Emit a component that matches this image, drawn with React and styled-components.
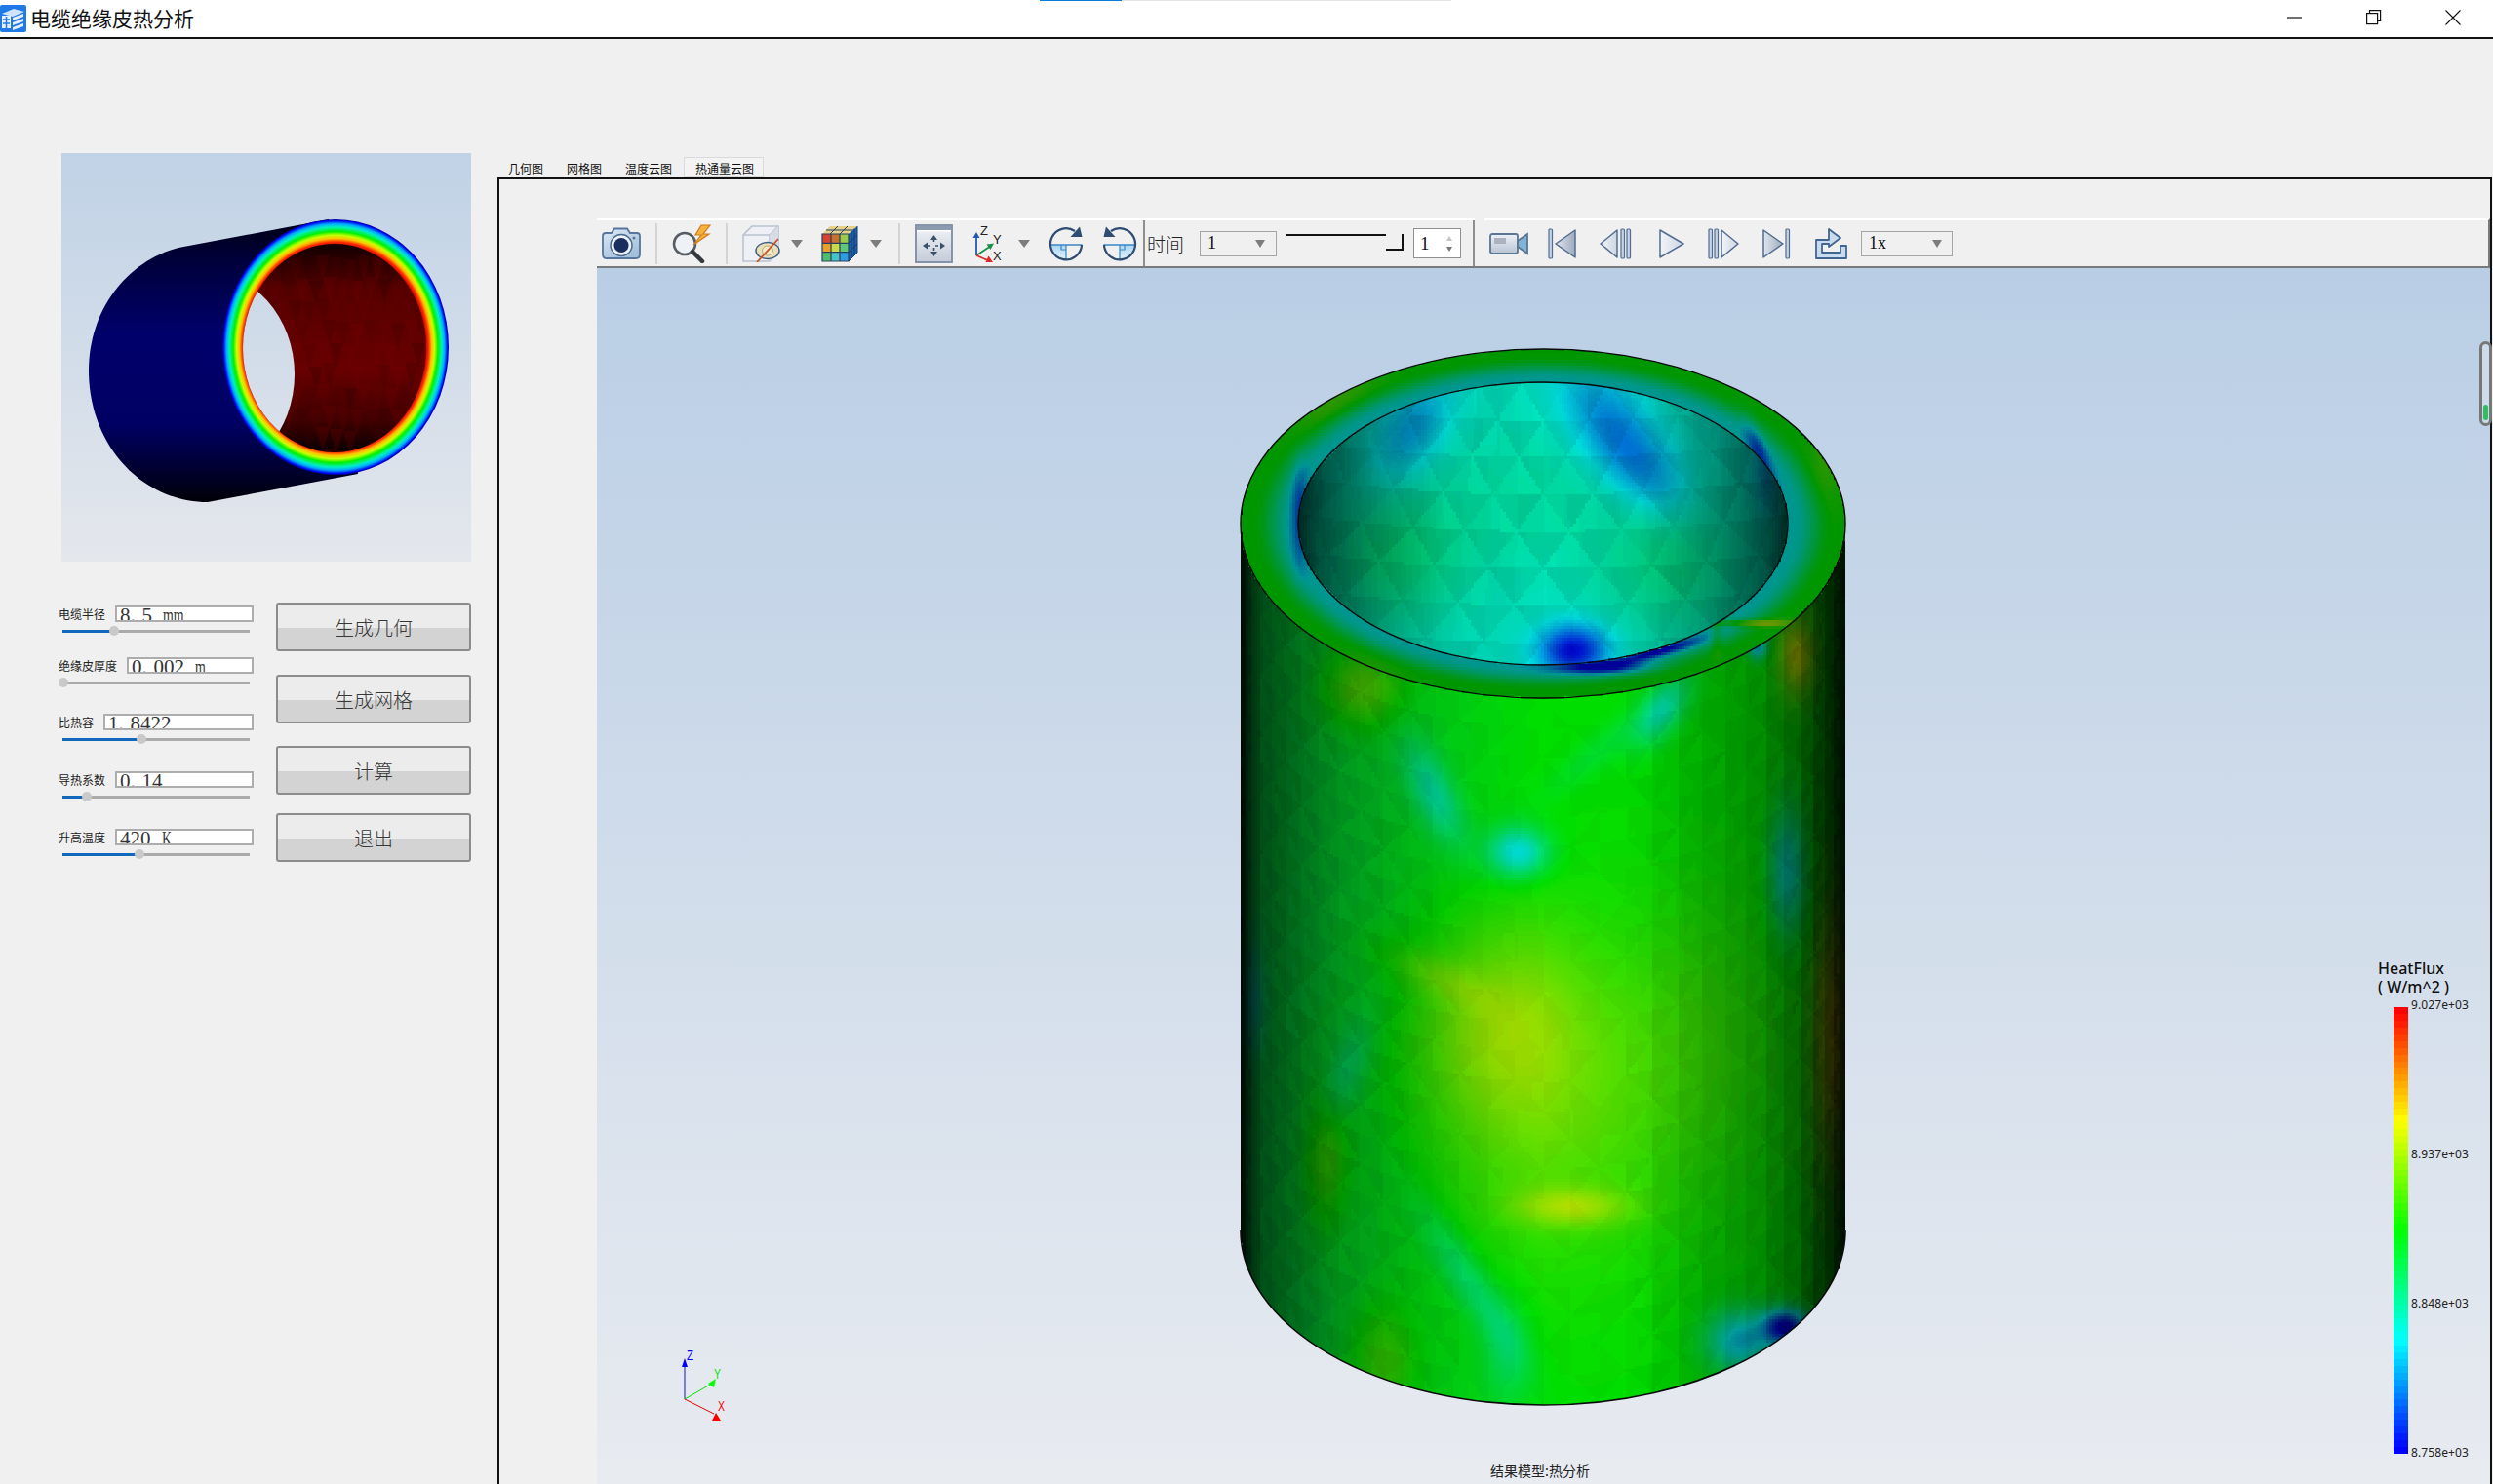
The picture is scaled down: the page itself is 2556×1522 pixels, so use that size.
import React from 'react';
import styled, { createGlobalStyle } from 'styled-components';

const CJK = '"Noto Sans CJK SC", "Noto Sans", sans-serif';
const SERIF = '"Liberation Serif", "Noto Sans CJK SC", serif';

const GlobalStyle = createGlobalStyle`
  html, body {
    margin: 0;
    padding: 0;
    background: #f0f0f0;
  }
`;

/* ---------- heat colours and the cylinder mesh ---------- */

const clamp = (v, a, b) => Math.min(b, Math.max(a, v));

const rainbow = (h) => {
  const t = clamp(h, 0, 1) * 4;
  if (t < 1) return [0, t * 255, 255];
  if (t < 2) return [0, 255, (2 - t) * 255];
  if (t < 3) return [(t - 2) * 255, 255, 0];
  return [255, (4 - t) * 255, 0];
};

const spots = (list, x, y) => {
  let sum = 0;
  for (const [cx, cy, sx, sy, amp, rot = 0] of list) {
    const a = (rot * Math.PI) / 180;
    const dx = x - cx;
    const dy = y - cy;
    const u = (dx * Math.cos(a) + dy * Math.sin(a)) / sx;
    const v = (-dx * Math.sin(a) + dy * Math.cos(a)) / sy;
    sum += amp * Math.exp(-0.5 * (u * u + v * v));
  }
  return sum;
};

const lerpTable = (table, x) => {
  for (let i = 1; i < table.length; i++) {
    if (x <= table[i][0]) {
      const [x0, y0] = table[i - 1];
      const [x1, y1] = table[i];
      return y0 + ((y1 - y0) * (x - x0)) / (x1 - x0);
    }
  }
  return table[table.length - 1][1];
};

const noise = (id) => {
  const s = Math.sin(id * 12.9898) * 43758.5453;
  return s - Math.floor(s);
};

const triId = (u, v) => {
  const row = Math.floor(v);
  const fv = v - row;
  const x = u + (row % 2 ? 1 : 0);
  const cell = Math.floor(x);
  const fx = x - cell;
  const side = cell % 2 === 0 ? (fx + fv > 1 ? 1 : 0) : fx < fv ? 1 : 0;
  return { id: row * 1009 + cell * 2 + side, cell, side };
};

const CX = 1582;
const TOP = 537;
const BOTTOM = 1262;
const RX = 310;
const RY = 179;

const bodySpots = [
  [1536, 1049, 60, 70, 0.11],
  [1580, 1130, 95, 115, 0.1],
  [1612, 1238, 42, 14, 0.13],
  [1470, 1000, 45, 14, 0.06, 25],
  [1557, 874, 22, 18, -0.25],
  [1471, 815, 40, 15, -0.15, 65],
  [1507, 1315, 62, 14, -0.11, 57],
  [1545, 1390, 18, 40, -0.08],
  [1704, 729, 14, 28, -0.18, 35],
  [1640, 770, 50, 12, -0.05, -40],
  [1833, 894, 13, 45, -0.22],
  [1831, 1361, 16, 13, -0.5],
  [1785, 1375, 24, 22, -0.28],
  [1397, 705, 28, 28, 0.14],
  [1359, 1185, 16, 50, 0.11],
  [1418, 1398, 24, 42, 0.1],
  [1284, 1025, 8, 40, -0.14],
  [1380, 1100, 14, 42, -0.08, 20],
  [1881, 1063, 14, 90, 0.25],
  [1843, 673, 13, 28, 0.22],
  [1802, 663, 7, 9, -0.3],
  [1740, 1060, 60, 100, 0.04],
];

const capSpots = [
  [1370, 403, 40, 14, 0.08, -35],
  [1875, 470, 14, 30, 0.07],
  [1333, 530, 6, 34, -0.18],
  [1805, 470, 6, 26, -0.2, -20],
  [1640, 684, 32, 5, -0.32],
  [1700, 668, 30, 4, -0.28, -15],
  [1795, 639, 30, 2.5, 0.28],
  [1760, 650, 4, 14, 0.12],
  [1405, 690, 26, 10, 0.06, 20],
];

const wallSpots = [
  [1448, 440, 40, 22, -0.11, -60],
  [1650, 435, 48, 26, -0.13, 55],
  [1690, 485, 36, 22, -0.09, 50],
  [1613, 667, 24, 18, -0.28],
  [1565, 513, 85, 60, 0.03],
  [1426, 573, 50, 50, 0.07],
  [1717, 580, 50, 50, 0.06],
  [1812, 480, 10, 30, -0.1],
];

const bodyShade = [[-1, 0.03], [-0.96, 0.2], [-0.93, 0.3], [-0.66, 0.58], [-0.3, 0.78], [0, 0.87], [0.3, 0.85], [0.5, 0.68], [0.7, 0.56], [0.83, 0.4], [0.96, 0.14], [1, 0.04]];
const wallShade = [[0, 0.84], [0.4, 0.78], [0.7, 0.55], [0.9, 0.32], [1, 0.16]];

const surfaceColor = (x, y) => {
  const dx = (x - CX) / RX;
  const dy = (y - TOP) / RY;
  const rho = Math.sqrt(dx * dx + dy * dy);
  if (rho < 0.81) {
    // inner wall, triangles fan out from the far rim
    const frac = clamp((y - 393) / 289, 0, 1);
    const w = 26 * (0.85 + 0.35 * frac);
    const tri = triId((x - CX) / w + 100, (y - 393 + 26 * dx * dx) / 38 + 4);
    const cw = Math.abs(x - CX) / 251;
    const b = lerpTable(wallShade, clamp(cw, 0, 1)) * (1 + (noise(tri.id) - 0.5) * 0.05 + (tri.side ? 0.035 : -0.035));
    const h = 0.285 + spots(wallSpots, x, y);
    return rainbow(h).map((c) => c * b);
  }
  if (rho <= 1) {
    const frac = (rho - 0.81) / 0.19;
    const s = clamp((frac - 0.1) / 0.7, 0, 1);
    const h = 0.26 + 0.24 * s * s * (3 - 2 * s) + spots(capSpots, x, y);
    return rainbow(h).map((c) => c * 0.58);
  }
  const cc = clamp(dx, -1, 1);
  const phi = Math.acos(cc);
  const sin = Math.sin(phi);
  const t = (y - RY * sin - TOP) / (BOTTOM - TOP);
  const N = 34;
  const u = (phi / Math.PI) * N;
  const tri = triId(u, t * 24 + 4);
  const cf = Math.cos((Math.PI * (tri.cell + (tri.side ? 0.7 : 0.3) - (Math.floor(t * 24 + 4) % 2 ? 1 : 0))) / N);
  const snap = cc > 0.1 ? cf * 0.8 + cc * 0.2 : cf * 0.35 + cc * 0.65;
  const leftFacet = cc < 0 ? (tri.side ? 0.05 : -0.05) * -cc : 0;
  const b = lerpTable(bodyShade, clamp(snap, -1, 1)) * (1 + (noise(tri.id) - 0.5) * 0.035 + leftFacet);
  const h = 0.5 + (cc < 0 ? 0.08 * cc : 0) + spots(bodySpots, x, y);
  return rainbow(h).map((c) => c * b);
};

const buildMesh = () => {
  const step = 3;
  const groups = new Map();
  const quant = (c) => clamp(Math.round(c / 6) * 6, 0, 255);
  for (let y = 354; y < 1446; y += step) {
    let runStart = null;
    let runKey = null;
    const flush = (end) => {
      if (runKey === null) return;
      const seg = `M${runStart} ${y}h${end - runStart}v${step}h${runStart - end}z`;
      groups.set(runKey, (groups.get(runKey) || '') + seg);
      runKey = null;
    };
    for (let x = 1268; x < 1898; x += step) {
      const px = x + step / 2;
      const py = y + step / 2;
      const dx = (px - CX) / RX;
      const inside =
        Math.abs(dx) <= 1.01 &&
        py >= TOP - RY * Math.sqrt(Math.max(0, 1 - dx * dx)) - 4 &&
        py <= BOTTOM + RY * Math.sqrt(Math.max(0, 1 - dx * dx)) + 4;
      if (!inside) {
        flush(x);
        continue;
      }
      const [r, g, b] = surfaceColor(clamp(px, CX - RX + 0.5, CX + RX - 0.5), py);
      const key = `rgb(${quant(r)},${quant(g)},${quant(b)})`;
      if (key !== runKey) {
        flush(x);
        runStart = x;
        runKey = key;
      }
    }
    flush(1898);
  }
  return [...groups.entries()];
};

const meshPaths = buildMesh();

const legendBands = (() => {
  const n = 66;
  const stops = [];
  for (let i = 0; i < n; i++) {
    const [r, g, b] = rainbow(1 - i / (n - 1));
    const col = `rgb(${Math.round(r)},${Math.round(g)},${Math.round(b)})`;
    stops.push(`${col} ${(i / n) * 100}%`, `${col} ${((i + 1) / n) * 100}%`);
  }
  return `linear-gradient(to bottom, ${stops.join(', ')})`;
})();

/* ---------- window chrome ---------- */

const Page = styled.div`
  width: 2556px;
  height: 1522px;
  display: flex;
  flex-direction: column;
  overflow: hidden;
  position: relative;
  background: #f0f0f0;
  font-family: ${CJK};
`;

const TitleBar = styled.div`
  height: 38px;
  display: flex;
  align-items: center;
  padding-right: 1px;
  background: #fff;
  border-bottom: 2px solid #111;
  flex: none;
`;

const TitleText = styled.div`
  margin-left: 4px;
  padding-bottom: 3px;
  font-size: 21px;
  color: #111;
  flex: 1;
`;

const WindowButton = styled.div`
  width: 81px;
  height: 36px;
  align-self: flex-start;
  display: flex;
  align-items: center;
  justify-content: center;
`;

const LoadLine = styled.div`
  position: absolute;
  top: 0;
  left: 1066px;
  width: 422px;
  height: 1px;
  background: linear-gradient(to right, #0a7bd8 84px, #e4e4e4 84px);
`;

const Main = styled.div`
  flex: 1;
  display: flex;
  min-height: 0;
`;

/* ---------- left column ---------- */

const LeftColumn = styled.div`
  width: 509px;
  flex: none;
  padding-top: 117px;
`;

const Preview = styled.div`
  width: 420px;
  height: 419px;
  margin-left: 63px;
  background: linear-gradient(to bottom, #c0d2e6, #e4e7ec);

  svg {
    display: block;
  }
`;

const Controls = styled.div`
  display: flex;
  margin-top: 42px;
`;

const Params = styled.div`
  width: 200px;
  margin-left: 60px;
  padding-top: 3px;
`;

const ParamRow = styled.div`
  margin-top: ${(p) => p.$gap}px;
`;

const ParamHead = styled.div`
  display: flex;
  align-items: center;
  gap: 10px;
`;

const ParamLabel = styled.div`
  font-size: 12px;
  line-height: 17px;
  color: #222;
  white-space: nowrap;
`;

const ParamValue = styled.div`
  flex: 1;
  height: 17px;
  box-sizing: border-box;
  border: 2px solid #adadad;
  background: #fff;
  overflow: hidden;
  padding-left: 3px;
  font-family: ${SERIF};
  font-size: 21px;
  line-height: 17px;
  color: #333;
  white-space: nowrap;
`;

const Dot = styled.span`
  display: inline-block;
  width: 12px;
`;

const Unit = styled.span`
  display: inline-block;
  margin-left: 11px;
  transform: scaleX(0.66);
  transform-origin: left center;
`;

const Track = styled.div`
  position: relative;
  width: 192px;
  height: 3px;
  margin: 8px 0 0 4px;
  background: #ababab;
`;

const TrackFill = styled.div`
  height: 100%;
  background: #1168bc;
`;

const Thumb = styled.div`
  position: absolute;
  top: -4px;
  width: 10px;
  height: 10px;
  margin-left: -5px;
  border-radius: 50%;
  background: #c9c9c9;
`;

const ActionColumn = styled.div`
  margin-left: 23px;
`;

const ActionButton = styled.div`
  width: 200px;
  height: 50px;
  box-sizing: border-box;
  margin-top: ${(p) => p.$gap}px;
  display: flex;
  align-items: center;
  justify-content: center;
  border: 2px solid #8c8c8c;
  border-radius: 3px;
  background: linear-gradient(to bottom, #ececec 52%, #d3d3d3 52%);
  font-size: 20px;
  font-weight: 300;
  color: #383838;
`;

/* ---------- tabs and toolbar ---------- */

const RightColumn = styled.div`
  flex: 1;
  min-width: 0;
  display: flex;
  flex-direction: column;
  padding-top: 121px;
`;

const Tabs = styled.div`
  display: flex;
  align-items: flex-end;
  height: 21px;
  flex: none;
`;

const Tab = styled.div`
  padding: 0 12px;
  height: 21px;
  line-height: 23px;
  font-size: 12px;
  color: #111;
  box-sizing: border-box;
  ${(p) => p.$active && 'padding-right: 10px; background: #f3f3f3; outline: 1px solid #dadada; outline-offset: -1px;'}
`;

const Pane = styled.div`
  flex: 1;
  min-height: 0;
  display: flex;
  flex-direction: column;
  margin-left: 1px;
  margin-right: 1px;
  padding: 40px 0 0 100px;
  border: 2px solid #111;
  border-bottom: 0;
`;

const ToolRow = styled.div`
  display: flex;
  box-sizing: border-box;
  height: 51px;
  flex: none;
  border-bottom: 2px solid #7a7a7a;
`;

const ToolSection = styled.div`
  display: flex;
  align-items: center;
  box-sizing: border-box;
  height: 49px;
  border-top: 2px solid #fff;
  ${(p) => (p.$grow ? 'flex: 1; border-right: 2px solid #7a7a7a; margin-left: 10px;' : 'width: 900px;')}
`;

const Tool = styled.div`
  flex: none;
  margin-left: ${(p) => p.$ml}px;
  display: flex;

  svg {
    display: block;
  }
`;

const Sep = styled.div`
  flex: none;
  width: 2px;
  height: ${(p) => (p.$tall ? 47 : 42)}px;
  margin-left: ${(p) => p.$ml}px;
  background: ${(p) => (p.$tall ? '#8f8f8f' : '#d4d4d4')};
`;

const Caret = styled.div`
  flex: none;
  margin-left: ${(p) => p.$ml}px;
  width: 0;
  height: 0;
  border-left: 6px solid transparent;
  border-right: 6px solid transparent;
  border-top: 8px solid #7d7d7d;
`;

const ToolText = styled.div`
  flex: none;
  width: 38px;
  margin-left: 2px;
  font-size: 19px;
  font-weight: 300;
  color: #222;
  white-space: nowrap;
`;

const Combo = styled.div`
  flex: none;
  box-sizing: border-box;
  width: ${(p) => p.$w}px;
  height: 26px;
  margin-left: ${(p) => p.$ml}px;
  padding: 0 8px 0 7px;
  display: flex;
  align-items: center;
  justify-content: space-between;
  border: 1.5px solid #a6a6a6;
  font-family: ${SERIF};
  font-size: 18px;
  color: #111;
`;

const ComboCaret = styled.div`
  width: 0;
  height: 0;
  margin-right: ${(p) => p.$mr}px;
  border-left: 5px solid transparent;
  border-right: 5px solid transparent;
  border-top: 8px solid #7d7d7d;
`;

const TimeSlider = styled.div`
  flex: none;
  display: flex;
  align-items: flex-start;
  width: 120px;
  height: 17px;
  margin-left: 10px;
  margin-bottom: 2px;
`;

const TimeLine = styled.div`
  width: 102px;
  height: 2px;
  background: #111;
`;

const TimeCorner = styled.div`
  width: 18px;
  height: 17px;
  box-sizing: border-box;
  border-right: 2px solid #111;
  border-bottom: 2px solid #111;
`;

const Spin = styled.div`
  flex: none;
  box-sizing: border-box;
  width: 49px;
  height: 31px;
  margin-left: 10px;
  padding: 0 8px 0 6px;
  display: flex;
  align-items: center;
  justify-content: space-between;
  border: 1.5px solid #909090;
  background: #fff;
  font-family: ${SERIF};
  font-size: 19px;
  color: #111;
`;

const SpinArrows = styled.div`
  display: flex;
  flex-direction: column;
  gap: 6px;
`;

const SpinArrow = styled.div`
  width: 0;
  height: 0;
  border-left: 3.5px solid transparent;
  border-right: 3.5px solid transparent;
  ${(p) => (p.$up ? 'border-bottom: 5px solid #c4c4c4;' : 'border-top: 5px solid #777;')}
`;

/* ---------- 3d view ---------- */

const Viewport = styled.div`
  flex: 1;
  min-height: 0;
  position: relative;
  background: linear-gradient(to bottom, #b9cee5, #e8ebf0);

  > svg:first-child {
    display: block;
  }
`;

const Triad = styled.svg`
  position: absolute;
  left: 78px;
  top: 1100px;
`;

const Legend = styled.div`
  position: absolute;
  left: 1826px;
  top: 709px;
  color: #111;
  font-family: "Noto Sans", sans-serif;
`;

const LegendTitle = styled.div`
  font-size: 16px;
  line-height: 19px;
  font-weight: 500;
  white-space: pre;
`;

const LegendBody = styled.div`
  display: flex;
  margin-top: 11px;
  margin-left: 16px;
`;

const LegendBar = styled.div`
  width: 15px;
  height: 458px;
`;

const LegendTicks = styled.div`
  height: 475px;
  margin-top: -10px;
  margin-left: 3px;
  display: flex;
  flex-direction: column;
  justify-content: space-between;
`;

const LegendTick = styled.div`
  font-size: 12px;
  line-height: 16px;
  color: #222;
  letter-spacing: 0.1px;
`;

const Caption = styled.div`
  position: absolute;
  left: 916px;
  bottom: 4px;
  font-size: 14px;
  line-height: 20px;
  color: #222;
  white-space: nowrap;
`;

const ScrollHint = styled.div`
  position: absolute;
  left: 1930px;
  top: 75px;
  width: 13px;
  height: 87px;
  box-sizing: border-box;
  border: 3px solid #777;
  border-radius: 7px;
  background: #ccdcea;
  display: flex;
  align-items: flex-end;
  justify-content: center;
  padding-bottom: 3px;
`;

const ScrollPill = styled.div`
  width: 5px;
  height: 16px;
  border-radius: 3px;
  background: #2dbf62;
`;

/* ---------- drawings ---------- */

const AppIcon = () => (
  <svg width="27" height="28" viewBox="0 0 27 28">
    <rect width="27" height="28" rx="2" fill="#1f7ae8" />
    <path d="M2 9 L14 4 L25 7 L13 12 Z" fill="#cfe3fb" />
    <path d="M13 13 L24 9 V12 L13 16 Z M13 18 L24 14 V17 L13 21 Z M13 23 L24 19 V22 L13 26 Z" fill="#e6f0fd" />
    <path d="M2 11 H11 V24 H2 Z" fill="#e6f0fd" />
    <path d="M3 15 H10 M3 19 H10 M6.500 12 V24" stroke="#1f7ae8" strokeWidth="1.500" />
  </svg>
);

const MinIcon = () => (
  <svg width="16" height="16" viewBox="0 0 16 16"><path d="M0 8 H15" stroke="#111" strokeWidth="1.200" /></svg>
);

const RestoreIcon = () => (
  <svg width="16" height="16" viewBox="0 0 16 16" fill="none" stroke="#111" strokeWidth="1.200">
    <rect x="0.600" y="3.600" width="11" height="11" />
    <path d="M3.500 3.500 V0.600 H14.600 V11.500 H11.600" />
  </svg>
);

const CloseIcon = () => (
  <svg width="16" height="16" viewBox="0 0 16 16" stroke="#111" strokeWidth="1.100"><path d="M0.500 0.500 L15.500 15.500 M15.500 0.500 L0.500 15.500" /></svg>
);

const PreviewTube = () => {
  const facets = [];
  for (let r = 0; r < 10; r++) {
    for (let c = 0; c < 16; c++) {
      const x = 240 + c * 14 + (r % 2) * 7;
      const y = 262 + r * 22 + (c % 3) * 2;
      const o = 0.05 + noise(r * 31 + c) * 0.22;
      facets.push(<path key={`${r}-${c}`} d={`M${x} ${y}l7 26l7 -26z`} fill={noise(r + c * 7) > 0.5 ? '#2a0000' : '#7a0000'} opacity={o} />);
    }
  }
  return (
    <svg width="420" height="419" viewBox="63 157 420 419">
      <defs>
        <linearGradient id="pvBg" gradientUnits="userSpaceOnUse" x1="0" y1="157" x2="0" y2="576">
          <stop offset="0" stopColor="#c0d2e6" />
          <stop offset="1" stopColor="#e4e7ec" />
        </linearGradient>
        <linearGradient id="pvShell" x1="0" y1="0" x2="0" y2="1">
          <stop offset="0" stopColor="#000012" />
          <stop offset="0.14" stopColor="#00003a" />
          <stop offset="0.4" stopColor="#00006a" />
          <stop offset="0.72" stopColor="#000064" />
          <stop offset="0.9" stopColor="#00002c" />
          <stop offset="1" stopColor="#000006" />
        </linearGradient>
        <linearGradient id="pvWall" x1="0" y1="0" x2="0" y2="1">
          <stop offset="0" stopColor="#120000" />
          <stop offset="0.22" stopColor="#560000" />
          <stop offset="0.6" stopColor="#680000" />
          <stop offset="0.85" stopColor="#400000" />
          <stop offset="1" stopColor="#060000" />
        </linearGradient>
        <radialGradient id="pvRing" cx="0.5" cy="0.5" r="0.5">
          <stop offset="0.8" stopColor="#c80000" />
          <stop offset="0.825" stopColor="#ff3000" />
          <stop offset="0.85" stopColor="#ffc000" />
          <stop offset="0.875" stopColor="#c8ff00" />
          <stop offset="0.905" stopColor="#00f000" />
          <stop offset="0.94" stopColor="#00f0c0" />
          <stop offset="0.965" stopColor="#00a8ff" />
          <stop offset="0.99" stopColor="#0000f0" />
          <stop offset="1" stopColor="#000090" />
        </radialGradient>
        <clipPath id="pvInner">
          <ellipse cx="343" cy="357" rx="94" ry="107" />
        </clipPath>
      </defs>
      <path d="M337 225 L183 254 C130 268 91 318 91 380 C91 456 145 515 213 515 L367 486 Z" fill="url(#pvShell)" />
      <ellipse cx="344" cy="356" rx="116" ry="131" fill="url(#pvRing)" />
      <ellipse cx="343" cy="357" rx="94" ry="107" fill="url(#pvWall)" />
      <g clipPath="url(#pvInner)">
        {facets}
        <ellipse cx="206" cy="384" rx="96" ry="107" fill="url(#pvBg)" />
      </g>
    </svg>
  );
};

const CameraIcon = () => (
  <svg width="40" height="33" viewBox="0 0 40 33">
    <defs>
      <linearGradient id="camBody" x1="0" y1="0" x2="0.6" y2="1">
        <stop offset="0" stopColor="#dfe9f5" />
        <stop offset="1" stopColor="#a3bfdc" />
      </linearGradient>
    </defs>
    <path d="M4 6 H10 L13 1.500 H26 L29 6 H36 Q39 6 39 9 V28 Q39 32 35 32 H5 Q1 32 1 28 V9 Q1 6 4 6 Z" fill="url(#camBody)" stroke="#56769b" strokeWidth="1.800" />
    <circle cx="20" cy="18.500" r="11" fill="#eef4fa" stroke="#4a6c92" strokeWidth="1.500" />
    <circle cx="20" cy="18.500" r="7.500" fill="#1a2e60" />
    <circle cx="33" cy="11" r="1.500" fill="#5c7391" />
  </svg>
);

const ZoomBoltIcon = () => (
  <svg width="41" height="40" viewBox="0 0 41 40">
    <circle cx="13" cy="20" r="11" fill="#eef2f6" stroke="#575d63" strokeWidth="2.600" />
    <path d="M21 28 L31 38" stroke="#34393f" strokeWidth="4.500" strokeLinecap="round" />
    <path d="M30 1 L24 11 L30 11 L22 21 L38 10 L32 10 L39 1 Z" fill="#f4b13c" stroke="#d17a1c" strokeWidth="1.200" />
  </svg>
);

const HideCubeIcon = () => (
  <svg width="39" height="38" viewBox="0 0 39 38">
    <path d="M10 1 H37 V28 L28 37 H1 V10 Z" fill="#eef0f5" stroke="#b9c3d0" strokeWidth="1.600" />
    <path d="M1 10 H28 V37 M28 10 L37 1" fill="none" stroke="#b9c3d0" strokeWidth="1.600" />
    <path d="M28 10 L37 1 V28 L28 37 Z" fill="#d6dbe4" />
    <ellipse cx="26" cy="26" rx="12" ry="8.500" fill="#e9dfb8" stroke="#3f5d84" strokeWidth="1.500" />
    <ellipse cx="26" cy="26" rx="5.500" ry="5" fill="#f2eac8" stroke="#b7ab7a" />
    <path d="M15 38 L37 14" stroke="#c8512a" strokeWidth="1.800" />
  </svg>
);

const ColorCubeIcon = () => {
  const cols = [
    ['#d8432f', '#c6712e', '#9acb4a'],
    ['#e8a02b', '#cbd84a', '#5fc77a'],
    ['#4fbd6e', '#47c3c8', '#2e9ce0'],
  ];
  return (
    <svg width="38" height="38" viewBox="0 0 38 38">
      <path d="M1 9 L9 1 H37 L28 9 Z" fill="#e7d08a" />
      <path d="M9 9 L17 1 M19 9 L27 1 M5 5 H33" stroke="#26405f" strokeWidth="1" />
      <path d="M28 9 L37 1 V28 L28 37 Z" fill="#1d5fa8" />
      {cols.map((row, r) =>
        row.map((c, i) => <rect key={`${r}${i}`} x={1 + i * 9} y={9 + r * 9.300} width="9" height="9.300" fill={c} />)
      )}
      <path d="M1 9 H28 V37 H1 Z M10 9 V37 M19 9 V37 M1 18.300 H28 M1 27.700 H28" fill="none" stroke="#26405f" strokeWidth="1.200" />
      <path d="M37 1 V28 L28 37 M31 6 V34 M34 3.500 V31 M28 18 L37 10 M28 28 L37 19" fill="none" stroke="#123c70" strokeWidth="1" />
    </svg>
  );
};

const FitIcon = () => (
  <svg width="39" height="40" viewBox="0 0 39 40">
    <defs>
      <linearGradient id="fitBg" x1="0" y1="0" x2="0" y2="1">
        <stop offset="0" stopColor="#f2f4f8" />
        <stop offset="1" stopColor="#c4ccd8" />
      </linearGradient>
    </defs>
    <rect x="1" y="1" width="37" height="38" fill="url(#fitBg)" stroke="#7c8ba2" strokeWidth="1.800" />
    <rect x="2" y="2" width="35" height="4" fill="#8d9bb0" />
    <rect x="2" y="6" width="35" height="1.500" fill="#fff" />
    <path d="M19.500 11 L23 16 H16 Z M19.500 33 L23 28 H16 Z M8 22 L13 18.500 V25.500 Z M31 22 L26 18.500 V25.500 Z" fill="#3b5168" />
    <path d="M19.500 15 V29 M12 22 H27" stroke="#3b5168" strokeWidth="1.600" strokeDasharray="3 6" />
  </svg>
);

const AxesIcon = () => (
  <svg width="33" height="39" viewBox="0 0 33 39">
    <path d="M4 32 V11" stroke="#2558b0" strokeWidth="1.800" />
    <path d="M4 8 L7.500 14 H0.500 Z" fill="#2558b0" />
    <path d="M4 32 L19 22" stroke="#1a8f4b" strokeWidth="1.800" />
    <path d="M22 19.500 L18.500 26 L14.500 20.500 Z" fill="#1a8f4b" />
    <path d="M4 32 L18 38" stroke="#e02828" strokeWidth="1.800" />
    <path d="M21 39 L13.500 39 L16.500 32.500 Z" fill="#e02828" />
    <text x="8" y="11" fontFamily="Liberation Sans" fontSize="13" fill="#222">Z</text>
    <text x="21" y="20" fontFamily="Liberation Sans" fontSize="13" fill="#222">Y</text>
    <text x="21" y="37" fontFamily="Liberation Sans" fontSize="13" fill="#222">X</text>
  </svg>
);

const RotateBody = styled.svg`
  transform: ${(p) => (p.$flip ? 'scaleX(-1)' : 'none')};
`;

const RotateIcon = ({ flip }) => {
  const id = flip ? 'rotB' : 'rotA';
  return (
    <RotateBody $flip={flip} width="36" height="38" viewBox="0 0 36 38">
      <defs>
        <linearGradient id={id} x1="0" y1="0" x2="0" y2="1">
          <stop offset="0" stopColor="#a9d6f2" />
          <stop offset="1" stopColor="#e6f3fb" />
        </linearGradient>
      </defs>
      <path d="M2 20 H18 V36 A16 16 0 0 1 2 20 Z" fill={`url(#${id})`} />
      <path d="M1.500 20 H34.500" stroke="#3b87c4" strokeWidth="1.500" />
      <path d="M18 20 V36 M13 20 V25 H18" stroke="#3b87c4" strokeWidth="1.200" fill="none" />
      <path d="M27 6 A16 16 0 1 0 34 20" fill="none" stroke="#2f4c72" strokeWidth="2.200" />
      <path d="M34.500 12 L22.500 12 L32 1.500 Z" fill="#2f4c72" />
    </RotateBody>
  );
};

const VideoIcon = () => (
  <svg width="41" height="24" viewBox="0 0 41 24">
    <defs>
      <linearGradient id="vidBody" x1="0" y1="0" x2="0" y2="1">
        <stop offset="0" stopColor="#eef1f6" />
        <stop offset="1" stopColor="#b8c4d4" />
      </linearGradient>
    </defs>
    <rect x="1" y="2" width="28" height="20" rx="2" fill="url(#vidBody)" stroke="#5b7594" strokeWidth="1.800" />
    <rect x="5" y="6" width="12" height="6" fill="#a9b2be" />
    <path d="M29 9 L39 2 V22 L29 15 Z" fill="#7fb3d8" stroke="#5b7594" strokeWidth="1.800" />
  </svg>
);

const MediaIcon = ({ w, bars, tri, light }) => {
  const id = `media${bars.join('')}${tri.replace(/\W/g, '')}`;
  return (
    <svg width={w} height="32" viewBox={`0 0 ${w} 32`}>
      <defs>
        <linearGradient id={id} x1="0" y1="0" x2="1" y2="0">
          <stop offset="0" stopColor={light ? '#f2f4f8' : '#dfe5ee'} />
          <stop offset="1" stopColor={light ? '#cdd6e2' : '#9eabbd'} />
        </linearGradient>
      </defs>
      {bars.map((x) => (
        <rect key={x} x={x} y="1" width="3.500" height="30" rx="1" fill="#c6d3e3" stroke="#526d91" strokeWidth="1.200" />
      ))}
      <polygon points={tri} fill={`url(#${id})`} stroke="#526d91" strokeWidth="1.500" strokeLinejoin="round" />
    </svg>
  );
};

const ExportIcon = () => (
  <svg width="33" height="34" viewBox="0 0 33 34">
    <path d="M1 13 H14 V2 L26 11 L14 20 V17 H7 V26 H26 V19 H32 V32 H1 Z" fill="#c9dcef" stroke="#41668f" strokeWidth="1.800" strokeLinejoin="round" />
  </svg>
);

const CylinderView = () => {
  const silhouette = `M${CX - RX} ${TOP} V${BOTTOM} A${RX} ${RY} 0 0 0 ${CX + RX} ${BOTTOM} V${TOP} A${RX} ${RY} 0 0 0 ${CX - RX} ${TOP} Z`;
  return (
    <svg width="1941" height="1247" viewBox="612 275 1941 1247">
      <defs>
        <clipPath id="cylClip">
          <path d={silhouette} />
        </clipPath>
      </defs>
      <g clipPath="url(#cylClip)">
        {meshPaths.map(([fill, d]) => (
          <path key={fill} fill={fill} d={d} shapeRendering="crispEdges" />
        ))}
      </g>
      <ellipse cx={CX} cy={TOP} rx={RX} ry={RY} fill="none" stroke="#0a0a0a" strokeWidth="1.400" />
      <ellipse cx={CX} cy={TOP} rx="251" ry="145" fill="none" stroke="#0a0a0a" strokeWidth="1.400" />
      <path d={`M${CX - RX} ${BOTTOM} A${RX} ${RY} 0 0 0 ${CX + RX} ${BOTTOM}`} fill="none" stroke="#0a0a0a" strokeWidth="1.600" />
    </svg>
  );
};

/* ---------- data ---------- */

const params = [
  { label: '电缆半径', gap: 0, thumb: 117, value: <>8<Dot>.</Dot>5<Unit>mm</Unit></> },
  { label: '绝缘皮厚度', gap: 25, thumb: 65, value: <>0<Dot>.</Dot>002<Unit>m</Unit></> },
  { label: '比热容', gap: 30, thumb: 145, value: <>1<Dot>.</Dot>8422</> },
  { label: '导热系数', gap: 31, thumb: 89, value: <>0<Dot>.</Dot>14</> },
  { label: '升高温度', gap: 31, thumb: 143, value: <>420<Unit>K</Unit></> },
];

const actions = [
  { label: '生成几何', gap: 0 },
  { label: '生成网格', gap: 24 },
  { label: '计算', gap: 23 },
  { label: '退出', gap: 19 },
];

const tabs = ['几何图', '网格图', '温度云图', '热通量云图'];

const App = () => (
  <Page>
    <GlobalStyle />
    <LoadLine />
    <TitleBar>
      <AppIcon />
      <TitleText>电缆绝缘皮热分析</TitleText>
      <WindowButton><MinIcon /></WindowButton>
      <WindowButton><RestoreIcon /></WindowButton>
      <WindowButton><CloseIcon /></WindowButton>
    </TitleBar>
    <Main>
      <LeftColumn>
        <Preview>
          <PreviewTube />
        </Preview>
        <Controls>
          <Params>
            {params.map((p) => (
              <ParamRow key={p.label} $gap={p.gap}>
                <ParamHead>
                  <ParamLabel>{p.label}</ParamLabel>
                  <ParamValue>{p.value}</ParamValue>
                </ParamHead>
                <Track>
                  <TrackFill style={{ width: p.thumb - 64 }} />
                  <Thumb style={{ left: p.thumb - 64 }} />
                </Track>
              </ParamRow>
            ))}
          </Params>
          <ActionColumn>
            {actions.map((a) => (
              <ActionButton key={a.label} $gap={a.gap}>{a.label}</ActionButton>
            ))}
          </ActionColumn>
        </Controls>
      </LeftColumn>
      <RightColumn>
        <Tabs>
          {tabs.map((t, i) => (
            <Tab key={t} $active={i === 3}>{t}</Tab>
          ))}
        </Tabs>
        <Pane>
          <ToolRow>
            <ToolSection>
              <Tool $ml={5}><CameraIcon /></Tool>
              <Sep $ml={15} />
              <Tool $ml={15}><ZoomBoltIcon /></Tool>
              <Sep $ml={14} />
              <Tool $ml={15}><HideCubeIcon /></Tool>
              <Caret $ml={11} />
              <Tool $ml={19}><ColorCubeIcon /></Tool>
              <Caret $ml={12} />
              <Sep $ml={17} />
              <Tool $ml={15}><FitIcon /></Tool>
              <Tool $ml={20}><AxesIcon /></Tool>
              <Caret $ml={14} />
              <Tool $ml={19}><RotateIcon /></Tool>
              <Tool $ml={19}><RotateIcon flip /></Tool>
              <Sep $ml={6} $tall />
              <ToolText>时间</ToolText>
              <Combo $w={79} $ml={16}>1<ComboCaret $mr={3} /></Combo>
              <TimeSlider>
                <TimeLine />
                <TimeCorner />
              </TimeSlider>
              <Spin>
                1
                <SpinArrows>
                  <SpinArrow $up />
                  <SpinArrow />
                </SpinArrows>
              </Spin>
              <Sep $ml={12} $tall />
            </ToolSection>
            <ToolSection $grow>
              <Tool $ml={5}><VideoIcon /></Tool>
              <Tool $ml={19}><MediaIcon w={29} bars={[1]} tri="28,2 28,30 8,16" /></Tool>
              <Tool $ml={24}><MediaIcon w={33} bars={[22, 28]} tri="18,2 18,30 1,16" light /></Tool>
              <Tool $ml={28}><MediaIcon w={26} bars={[]} tri="1,2 1,30 25,16" light /></Tool>
              <Tool $ml={24}><MediaIcon w={32} bars={[1, 7]} tri="14,2 14,30 31,16" light /></Tool>
              <Tool $ml={24}><MediaIcon w={29} bars={[24]} tri="1,2 1,30 21,16" /></Tool>
              <Tool $ml={25}><ExportIcon /></Tool>
              <Combo $w={94} $ml={14}>1x<ComboCaret $mr={2} /></Combo>
            </ToolSection>
          </ToolRow>
          <Viewport>
            <CylinderView />
            <Triad width="70" height="90" viewBox="0 0 70 90">
              <path d="M12 60 V27" stroke="#1414c8" strokeWidth="1" />
              <path d="M12 18 L15 27 H9 Z" fill="#0000ff" />
              <path d="M12 60 L38 45" stroke="#00e000" strokeWidth="1" />
              <path d="M44 39 L42 48 L36 44 Z" fill="#00ff00" />
              <path d="M12 60 L42 75" stroke="#e00000" strokeWidth="1" />
              <path d="M44 74 L49 82 H40 Z" fill="#ff0000" />
              <text x="14" y="20" fontFamily="Liberation Sans" fontSize="14" textLength="7" lengthAdjust="spacingAndGlyphs" fill="#0000ff">Z</text>
              <text x="42" y="39" fontFamily="Liberation Sans" fontSize="14" textLength="7" lengthAdjust="spacingAndGlyphs" fill="#00e000">Y</text>
              <text x="46" y="72" fontFamily="Liberation Sans" fontSize="14" textLength="7" lengthAdjust="spacingAndGlyphs" fill="#ff0000">X</text>
            </Triad>
            <Legend>
              <LegendTitle>{'HeatFlux'}</LegendTitle>
              <LegendTitle>{'( W/m^2 )'}</LegendTitle>
              <LegendBody>
                <LegendBar style={{ background: legendBands }} />
                <LegendTicks>
                  <LegendTick>9.027e+03</LegendTick>
                  <LegendTick>8.937e+03</LegendTick>
                  <LegendTick>8.848e+03</LegendTick>
                  <LegendTick>8.758e+03</LegendTick>
                </LegendTicks>
              </LegendBody>
            </Legend>
            <Caption>结果模型:热分析</Caption>
            <ScrollHint><ScrollPill /></ScrollHint>
          </Viewport>
        </Pane>
      </RightColumn>
    </Main>
  </Page>
);

export default App;
